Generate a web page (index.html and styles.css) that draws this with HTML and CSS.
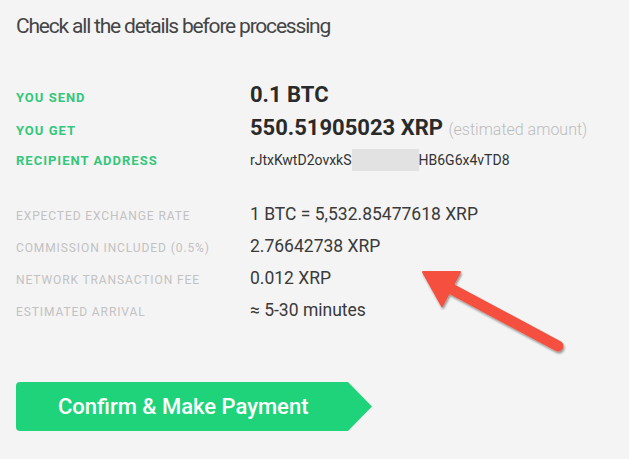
FILE: index.html
```html
<!DOCTYPE html>
<html lang="en">
<head>
    <meta charset="UTF-8">
    <meta name="viewport" content="width=device-width, initial-scale=1.0">
    <title>Check Details</title>
    <link rel="stylesheet" href="styles.css">
</head>
<body>
    <div class="page">
        <h1 class="title">Check all the details before processing</h1>

        <!-- Main amounts -->
        <div class="details main">
            <div class="row">
                <span class="label green">You send</span>
                <span class="value big">0.1 BTC</span>
            </div>
            <div class="row">
                <span class="label green">You get</span>
                <span class="value big">550.51905023 XRP <span class="note">(estimated amount)</span></span>
            </div>
            <div class="row">
                <span class="label green">Recipient address</span>
                <span class="value address">rJtxKwtD2ovxkS<span class="redacted"></span>HB6G6x4vTD8</span>
            </div>
        </div>

        <!-- Rates and fees -->
        <div class="details extra">
            <div class="row">
                <span class="label grey">Expected exchange rate</span>
                <span class="value">1 BTC = 5,532.85477618 XRP</span>
            </div>
            <div class="row">
                <span class="label grey">Commission included (0.5%)</span>
                <span class="value">2.76642738 XRP</span>
            </div>
            <div class="row">
                <span class="label grey">Network transaction fee</span>
                <span class="value">0.012 XRP</span>
            </div>
            <div class="row">
                <span class="label grey">Estimated arrival</span>
                <span class="value">&asymp; 5-30 minutes</span>
            </div>
        </div>

        <button class="confirm-btn">Confirm &amp; Make Payment</button>

        <!-- annotation arrow -->
        <svg class="arrow" width="180" height="120" viewBox="0 0 180 120">
            <defs>
                <filter id="shadow" x="-20%" y="-20%" width="140%" height="140%">
                    <feDropShadow dx="1" dy="2" stdDeviation="1.2" flood-color="#000" flood-opacity="0.4"/>
                </filter>
            </defs>
            <g filter="url(#shadow)" fill="#f5503f" stroke="#f5503f">
                <line x1="44" y1="35" x2="158" y2="96" stroke-width="11" stroke-linecap="round"/>
                <polygon points="23,22 60,22 42,56" stroke-width="2" stroke-linejoin="round"/>
            </g>
        </svg>
    </div>
</body>
</html>
```

FILE: styles.css
```css
body {
    margin: 0;
    font-family: Roboto, "Liberation Sans", sans-serif;
    background-color: #f4f4f4;
    color: #333;
}

.page {
    position: relative;
    padding: 14px 16px 0;
    height: 445px;
}

.title {
    margin: 0;
    font-size: 21px;
    line-height: 25px;
    font-weight: 400;
    letter-spacing: -1.2px;
    color: #444;
}

.details .row {
    display: flex;
    align-items: baseline;
}

.main {
    margin-top: 39px;
}

.main .row {
    height: 33px;
    line-height: 33px;
}

.extra {
    margin-top: 21px;
}

.extra .row {
    height: 32px;
    line-height: 32px;
}

.label {
    width: 234px;
    flex-shrink: 0;
    text-transform: uppercase;
}

.label.green {
    font-size: 13px;
    font-weight: 700;
    letter-spacing: 1px;
    color: #34c77b;
}

.label.grey {
    font-size: 12px;
    font-weight: 400;
    letter-spacing: 0.9px;
    color: #c2c2c2;
}

.value {
    font-size: 17.5px;
    color: #3a3a3a;
}

.value.big {
    font-size: 22px;
    font-weight: 700;
    color: #2a2a2a;
}

.note {
    font-size: 16px;
    font-weight: 300;
    color: #bcbcbc;
}

.value.address {
    font-size: 14px;
    color: #333;
}

.redacted {
    display: inline-block;
    width: 67px;
    height: 22px;
    vertical-align: -6px;
    background-color: #e2e2e2;
}

.confirm-btn {
    display: block;
    margin-top: 56px;
    width: 356px;
    height: 49px;
    padding: 0 0 0 42px;
    border: none;
    border-radius: 4px;
    background-color: #1ed37a;
    color: #fff;
    font-family: Roboto, "Liberation Sans", sans-serif;
    font-size: 22px;
    font-weight: 500;
    text-align: left;
    clip-path: polygon(0 0, 332px 0, 100% 50%, 332px 100%, 0 100%);
    cursor: pointer;
}

.arrow {
    position: absolute;
    left: 400px;
    top: 250px;
}
```
